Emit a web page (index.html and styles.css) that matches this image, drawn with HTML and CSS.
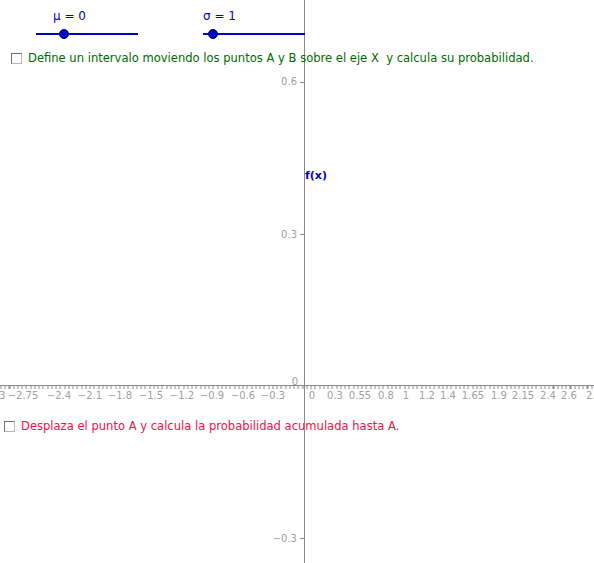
FILE: index.html
```html
<!DOCTYPE html>
<html>
<head>
<meta charset="utf-8">
<link rel="stylesheet" href="styles.css">
</head>
<body>
<div class="applet">
  <div class="yaxis"></div>
  <div class="xaxis"></div>
  <div class="xticks"></div>

  <div class="ytick" style="top:82px"></div>
  <div class="ytick" style="top:234px"></div>
  <div class="ytick" style="top:538px"></div>
  <span class="ylabel" style="top:75px">0.6</span>
  <span class="ylabel" style="top:228px">0.3</span>
  <span class="ylabel" style="top:532px">−0.3</span>
  <span class="ylabel zero" style="top:375px">0</span>

  <div class="xlabels">
    <span class="xl" style="left:-2px">−3</span>
    <span class="xl" style="left:23px">−2.75</span>
    <span class="xl" style="left:59px">−2.4</span>
    <span class="xl" style="left:90px">−2.1</span>
    <span class="xl" style="left:120px">−1.8</span>
    <span class="xl" style="left:151px">−1.5</span>
    <span class="xl" style="left:182px">−1.2</span>
    <span class="xl" style="left:212px">−0.9</span>
    <span class="xl" style="left:243px">−0.6</span>
    <span class="xl" style="left:273px">−0.3</span>
    <span class="xl" style="left:312px">0</span>
    <span class="xl" style="left:335px">0.3</span>
    <span class="xl" style="left:360px">0.55</span>
    <span class="xl" style="left:386px">0.8</span>
    <span class="xl" style="left:406px">1</span>
    <span class="xl" style="left:427px">1.2</span>
    <span class="xl" style="left:448px">1.4</span>
    <span class="xl" style="left:473px">1.65</span>
    <span class="xl" style="left:499px">1.9</span>
    <span class="xl" style="left:523px">2.15</span>
    <span class="xl" style="left:548px">2.4</span>
    <span class="xl" style="left:569px">2.6</span>
    <span class="xl" style="left:594px">2.9</span>
  </div>

  <div class="slider mu">
    <span class="slabel">μ = 0</span>
    <div class="track"><span class="knob"></span></div>
  </div>
  <div class="slider sigma">
    <span class="slabel">σ = 1</span>
    <div class="track"><span class="knob"></span></div>
  </div>

  <label class="check green"><span class="box"></span>Define un intervalo moviendo los puntos A y B sobre el eje X&nbsp; y calcula su probabilidad.</label>
  <label class="check red"><span class="box"></span>Desplaza el punto A y calcula la probabilidad acumulada hasta A.</label>

  <span class="fx">f(x)</span>
</div>
</body>
</html>
```
FILE: styles.css
```css
html, body {
  margin: 0;
  padding: 0;
  background: #ffffff;
}
.applet {
  position: relative;
  width: 594px;
  height: 563px;
  overflow: hidden;
  background: #ffffff;
  font-family: "DejaVu Sans", "Liberation Sans", sans-serif;
}
.yaxis {
  position: absolute;
  left: 304px;
  top: 0;
  width: 1px;
  height: 563px;
  background: #8a8a8a;
}
.xaxis {
  position: absolute;
  left: 0;
  top: 385px;
  width: 594px;
  height: 1px;
  background: #8a8a8a;
}
.xticks {
  position: absolute;
  left: 0;
  top: 386px;
  width: 594px;
  height: 3px;
  background-image: repeating-linear-gradient(to right, #8a8a8a 0, #8a8a8a 1px, transparent 1px, transparent 4.25px);
  background-position: 0.5px 0;
}
.ytick {
  position: absolute;
  left: 300px;
  width: 4px;
  height: 1px;
  background: #8a8a8a;
}
.ylabel {
  position: absolute;
  right: 297px;
  font-size: 10px;
  color: #a0a0a0;
  line-height: 13px;
}
.ylabel.zero {
  right: 296px;
}
.xlabels {
  position: absolute;
  left: 0;
  top: 389px;
  width: 594px;
  height: 14px;
}
.xl {
  position: absolute;
  top: 0;
  transform: translateX(-50%);
  font-size: 10px;
  line-height: 13px;
  color: #a0a0a0;
  white-space: nowrap;
}
.slider {
  position: absolute;
  width: 102px;
}
.slider.mu {
  left: 36px;
  top: 8px;
}
.slider.sigma {
  left: 203px;
  top: 8px;
}
.slabel {
  display: block;
  font-size: 12px;
  line-height: 16px;
  color: #0000c8;
  padding-left: 17px;
}
.slider.sigma .slabel {
  padding-left: 0;
}
.track {
  position: relative;
  margin-top: 9px;
  height: 2px;
  background: #0000c0;
}
.knob {
  position: absolute;
  top: -4px;
  width: 8px;
  height: 8px;
  border-radius: 50%;
  background: #0000cc;
  border: 1px solid #000033;
  box-sizing: content-box;
  left: 23px;
}
.slider.sigma .knob {
  left: 5px;
}
.check {
  position: absolute;
  display: flex;
  align-items: center;
  gap: 6px;
  font-size: 11.55px;
  line-height: 14px;
  white-space: nowrap;
}
.check.green {
  left: 11px;
  top: 51px;
  color: #006a00;
}
.check.red {
  left: 4px;
  top: 419px;
  color: #f0104a;
}
.box {
  display: block;
  width: 9px;
  height: 9px;
  border: 1px solid #6f6f6f;
  border-right-color: #b5b5b5;
  border-bottom-color: #b5b5b5;
  background: #ffffff;
}
.fx {
  position: absolute;
  left: 305px;
  top: 169px;
  font-size: 11px;
  font-weight: bold;
  color: #0000c8;
  line-height: 14px;
}
```
